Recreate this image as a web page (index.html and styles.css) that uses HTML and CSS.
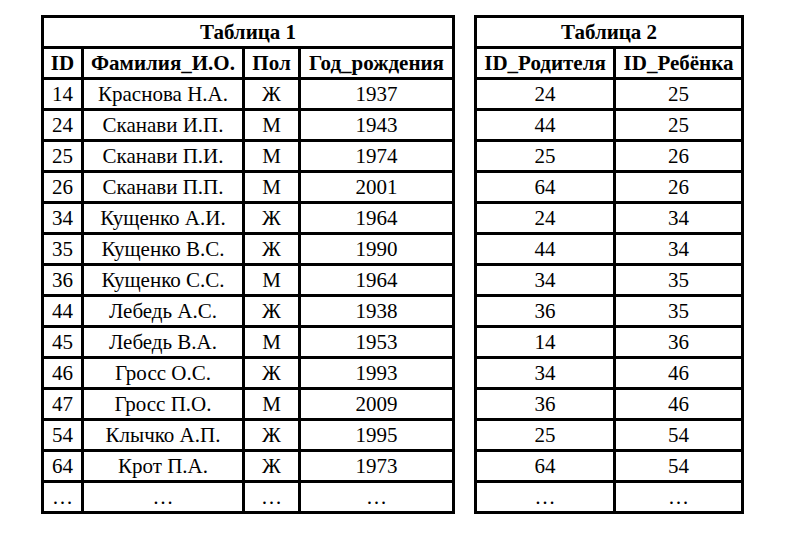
FILE: index.html
```html
<!DOCTYPE html>
<html lang="ru">
<head>
<meta charset="utf-8">
<title>Таблицы</title>
<link rel="stylesheet" href="styles.css">
</head>
<body>
<div class="tables">
  <table class="t1">
    <colgroup><col class="c-id"><col class="c-name"><col class="c-sex"><col class="c-year"></colgroup>
    <tr><th colspan="4">Таблица 1</th></tr>
    <tr><th>ID</th><th>Фамилия_И.О.</th><th>Пол</th><th>Год_рождения</th></tr>
    <tr><td>14</td><td>Краснова Н.А.</td><td>Ж</td><td>1937</td></tr>
    <tr><td>24</td><td>Сканави И.П.</td><td>М</td><td>1943</td></tr>
    <tr><td>25</td><td>Сканави П.И.</td><td>М</td><td>1974</td></tr>
    <tr><td>26</td><td>Сканави П.П.</td><td>М</td><td>2001</td></tr>
    <tr><td>34</td><td>Кущенко А.И.</td><td>Ж</td><td>1964</td></tr>
    <tr><td>35</td><td>Кущенко В.С.</td><td>Ж</td><td>1990</td></tr>
    <tr><td>36</td><td>Кущенко С.С.</td><td>М</td><td>1964</td></tr>
    <tr><td>44</td><td>Лебедь А.С.</td><td>Ж</td><td>1938</td></tr>
    <tr><td>45</td><td>Лебедь В.А.</td><td>М</td><td>1953</td></tr>
    <tr><td>46</td><td>Гросс О.С.</td><td>Ж</td><td>1993</td></tr>
    <tr><td>47</td><td>Гросс П.О.</td><td>М</td><td>2009</td></tr>
    <tr><td>54</td><td>Клычко А.П.</td><td>Ж</td><td>1995</td></tr>
    <tr><td>64</td><td>Крот П.А.</td><td>Ж</td><td>1973</td></tr>
    <tr><td>…</td><td>…</td><td>…</td><td>…</td></tr>
  </table>
  <table class="t2">
    <colgroup><col class="c-par"><col class="c-child"></colgroup>
    <tr><th colspan="2">Таблица 2</th></tr>
    <tr><th>ID_Родителя</th><th>ID_Ребёнка</th></tr>
    <tr><td>24</td><td>25</td></tr>
    <tr><td>44</td><td>25</td></tr>
    <tr><td>25</td><td>26</td></tr>
    <tr><td>64</td><td>26</td></tr>
    <tr><td>24</td><td>34</td></tr>
    <tr><td>44</td><td>34</td></tr>
    <tr><td>34</td><td>35</td></tr>
    <tr><td>36</td><td>35</td></tr>
    <tr><td>14</td><td>36</td></tr>
    <tr><td>34</td><td>46</td></tr>
    <tr><td>36</td><td>46</td></tr>
    <tr><td>25</td><td>54</td></tr>
    <tr><td>64</td><td>54</td></tr>
    <tr><td>…</td><td>…</td></tr>
  </table>
</div>
</body>
</html>
```

FILE: styles.css
```css
html, body {
  margin: 0;
  padding: 0;
  background: #ffffff;
}

body {
  font-family: "Liberation Serif", "Times New Roman", serif;
  font-size: 21px;
  color: #000000;
}

.tables {
  display: flex;
  align-items: flex-start;
  gap: 19px;
  padding: 15px 0 0 41px;
}

table {
  border-collapse: separate;
  border-spacing: 0;
  table-layout: fixed;
  border-top: 3px solid #000;
  border-left: 3px solid #000;
}

th, td {
  height: 28px;
  padding: 0;
  line-height: 28px;
  text-align: center;
  vertical-align: middle;
  border-right: 3px solid #000;
  border-bottom: 3px solid #000;
  white-space: nowrap;
}

th {
  font-weight: bold;
}

.t1 { width: 414px; }
.t1 .c-id { width: 40px; }
.t1 .c-name { width: 161px; }
.t1 .c-sex { width: 56px; }
.t1 .c-year { width: 154px; }

.t2 { width: 270px; }
.t2 .c-par { width: 139px; }
.t2 .c-child { width: 128px; }
```
